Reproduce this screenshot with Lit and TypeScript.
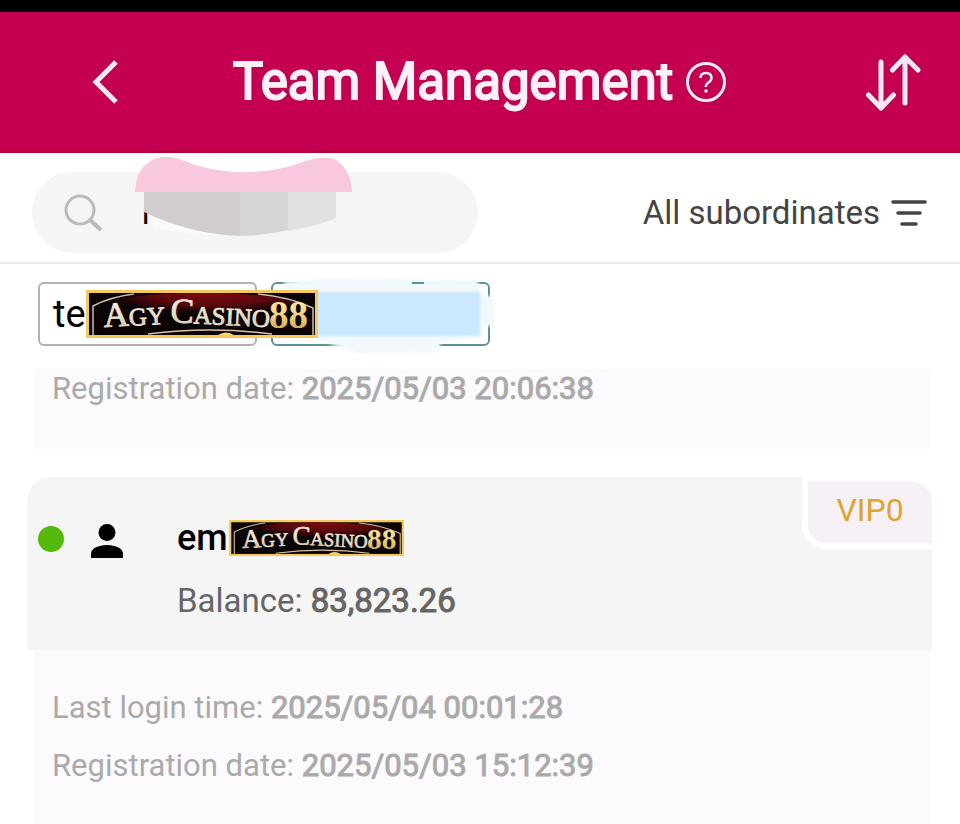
import { LitElement, html, css } from "lit";
import { customElement, property } from "lit/decorators.js";

@customElement("casino-logo")
class CasinoLogo extends LitElement {
  static styles = css`
    :host { display: block; }
    .plate { display: block; width: 100%; height: auto; }
    .word { font-family: "Liberation Serif", "Times New Roman", serif; fill: url(#silver); stroke: #f0e6d4; stroke-width: 0.8; }
    .gold { font-family: "Liberation Serif", "Times New Roman", serif; font-weight: 700; fill: url(#gold); }
    .big { font-size: 35px; }
    .small { font-size: 25px; }
    .digits { font-size: 39px; }
  `;

  render() {
    return html`<svg class="plate" viewBox="0 0 232 48" role="img" aria-label="Agy Casino88">
      <defs>
        <linearGradient id="silver" x1="0" y1="0" x2="0" y2="1">
          <stop offset="0" stop-color="#fffdf4" /><stop offset="0.6" stop-color="#e6dac4" /><stop offset="1" stop-color="#b39a78" />
        </linearGradient>
        <linearGradient id="gold" x1="0" y1="0" x2="0" y2="1">
          <stop offset="0" stop-color="#fff3b4" /><stop offset="0.5" stop-color="#f3d584" /><stop offset="1" stop-color="#c39550" />
        </linearGradient>
        <radialGradient id="glow" cx="0.55" cy="0" r="0.5">
          <stop offset="0" stop-color="#7d0c10" /><stop offset="0.6" stop-color="#5a080b" /><stop offset="1" stop-color="#0b0405" />
        </radialGradient>
      </defs>
      <rect width="232" height="48" fill="#f5c95a" />
      <rect x="3" y="3" width="226" height="42" fill="#0b0405" />
      <path d="M7 16Q40 3 116 3T227 16L225 36Q116 44 60 43L7 38Z" fill="url(#glow)" />
      <path d="M7 45V16Q24 7 48 4M172 4Q204 7 227 18V45" fill="none" stroke="#cdbfae" stroke-width="1.5" />
      <path d="M62 44Q124 36 186 44" fill="none" stroke="#d8c5a0" stroke-width="1.5" />
      <path d="M132 45Q140 40 148 45Z" fill="#ffd869" />
      <text class="word" transform="rotate(-3 18 37)"><tspan class="big" x="18" y="37">A</tspan><tspan class="small">GY</tspan></text>
      <text class="word" transform="rotate(3 84 32)"><tspan class="big" x="84" y="32">C</tspan><tspan class="small">ASINO</tspan></text>
      <text class="gold digits" x="183" y="38">88</text>
    </svg>`;
  }
}

interface Fact { label: string; value: string; }

@customElement("fact-line")
class FactLine extends LitElement {
  @property() label = "";
  @property() value = "";
  static styles = css`
    :host { display: block; white-space: nowrap; }
    .value { -webkit-text-stroke: 1px currentColor; }
  `;
  render() {
    return html`<span>${this.label}:</span> <span class="value">${this.value}</span>`;
  }
}

@customElement("app-root")
class AppRoot extends LitElement {
  static styles = css`
    :host {
      display: flex; flex-direction: column; min-height: 100vh;
      background: #fff; color: #000;
      font-family: Roboto, "Liberation Sans", sans-serif; font-size: 32px; line-height: 40px;
    }
    * { box-sizing: border-box; }
    button { border: 0; padding: 0; background: none; font: inherit; color: inherit; cursor: pointer; }
    svg { display: block; }
    .status { height: 12px; background: #000; }
    .header {
      display: grid; grid-template-columns: 1fr auto 1fr; align-items: center;
      height: 141px; padding: 0 38px; background: #c60051; color: #ffe6f4;
      border-bottom: 2px solid #a8003f;
    }
    .heading { display: flex; align-items: center; gap: 12px; }
    .title {
      margin: 0; font-size: 51px; line-height: 64px; font-weight: 400; white-space: nowrap; color: #fff0f8;
      -webkit-text-stroke: 2px currentColor; text-shadow: 0 0 3px #6d1040;
    }
    .header svg { filter: drop-shadow(0 0 1px #7d1648); }
    .sort { justify-self: end; }
    .back { justify-self: start; margin-left: 52px; }
    .toolbar {
      display: flex; align-items: center; justify-content: space-between;
      padding: 19px 32px 9px; border-bottom: 2px solid #ede6eb;
    }
    .search {
      position: relative; display: flex; align-items: center; gap: 40px; flex: 0 1 446px; min-width: 0;
      height: 81px; padding: 0 32px; border-radius: 41px; background: #f5f5f5;
    }
    .search-icon { flex: none; }
    .query { flex: 1; width: 0; min-width: 0; border: 0; padding: 0; background: none; font: inherit; outline: none; color: #000; }
    .scribble { position: absolute; left: 102px; top: -16px; }
    .filter { display: flex; align-items: center; gap: 10px; color: #444; white-space: nowrap; font-size: 33px; }
    .tabs { position: relative; display: flex; gap: 14px; padding: 18px 38px 23px; }
    .tab {
      width: 219px; height: 64px; padding: 0 13px; text-align: left; font-size: 38px;
      border: 2px solid #b2b0b2; border-radius: 6px;
    }
    .tab.active { border-color: #5c9298; }
    .smear { position: absolute; left: 262px; top: 4px; }
    .tab-logo { position: absolute; left: 86px; top: 26px; width: 232px; }
    .facts { display: flex; flex-direction: column; gap: 18px; margin: 0 30px 0 34px; padding: 0 18px; background: #fcfafd; color: #aaa; font-size: 31px; }
    .previous { height: 80px; }
    .card { display: flex; flex-direction: column; flex: 1; margin-top: 28px; }
    .summary {
      position: relative; display: grid; grid-template-columns: 26px 34px auto; column-gap: 26px;
      height: 173px; margin: 0 28px 0 27px; padding: 40px 11px 0; border-radius: 24px 24px 0 0; background: #f5f5f5;
    }
    .online { width: 26px; height: 26px; margin-top: 9px; border-radius: 50%; background: #55b90c; }
    .person { margin-top: 6px; }
    .account { display: flex; flex-direction: column; gap: 22px; padding-left: 27px; color: #666; }
    .name { display: flex; align-items: center; gap: 1px; margin: 0; height: 42px; color: #000; font-size: 36px; font-weight: 500; }
    .name-logo { width: 175px; }
    .money { font-size: 33px; }
    .vip {
      position: absolute; right: 0; top: 0; width: 130px; height: 72px;
      border: solid #fff; border-width: 4px 0 6px 6px; border-radius: 0 24px 0 24px;
      background: #f6f1f6; color: #dfa32f; text-align: center; line-height: 58px; font-size: 32px;
    }
    .details { flex: 1; padding-top: 38px; padding-bottom: 36px; }
  `;

  private previous: Fact[] = [{ label: "Registration date", value: "2025/05/03 20:06:38" }];
  private details: Fact[] = [
    { label: "Last login time", value: "2025/05/04 00:01:28" },
    { label: "Registration date", value: "2025/05/03 15:12:39" },
  ];

  private facts(list: Fact[]) {
    return list.map((f) => html`<fact-line .label=${f.label} .value=${f.value}></fact-line>`);
  }

  render() {
    return html`
      <div class="status"></div>
      <header class="header">
        <button class="back" aria-label="Back">
          <svg width="30" height="46" viewBox="0 0 30 46" fill="none" stroke="currentColor" stroke-width="5"><path d="M26 3L6 23L26 43" /></svg>
        </button>
        <div class="heading">
          <h1 class="title">Team Management</h1>
          <button aria-label="Help">
            <svg width="42" height="42" viewBox="0 0 42 42" fill="none" stroke="currentColor" stroke-width="3">
              <circle cx="21" cy="21" r="18.5" />
              <path d="M15.5 17Q15.5 12 21 12T26.5 17Q26.5 19.5 23.5 21.5T21 26" stroke-width="2.6" />
              <circle cx="21" cy="30" r="1.8" fill="currentColor" stroke="none" />
            </svg>
          </button>
        </div>
        <button class="sort" aria-label="Sort">
          <svg width="58" height="60" viewBox="0 0 58 60" fill="none" stroke="currentColor" stroke-width="5" stroke-linecap="round" stroke-linejoin="round">
            <path d="M17 10V56M4.5 43L17 56L29.5 43M41 51V5M28.5 18L41 5L54 18" />
          </svg>
        </button>
      </header>
      <div class="toolbar">
        <div class="search">
          <svg class="search-icon" width="38" height="38" viewBox="0 0 38 38" fill="none" stroke="#bbb" stroke-width="3">
            <circle cx="16" cy="16" r="14" /><path d="M26 26L37 36" stroke-width="4" />
          </svg>
          <input class="query" type="text" aria-label="Search members" value="r" />
          <svg class="scribble" width="220" height="84" viewBox="0 0 220 84" aria-hidden="true">
            <path d="M16 60Q70 76 100 79Q60 80 20 72Z" fill="#fafafa" />
            <path d="M10 34H106V80Q56 78 10 56Z" fill="#d0ccd0" />
            <path d="M106 34H154V74Q130 80 106 80Z" fill="#d5d5d5" />
            <path d="M154 34H202V62Q184 70 154 75Z" fill="#e2e1e2" />
            <path d="M1 36Q2 8 24 2Q36 -2 58 8Q108 24 160 9Q190 -3 202 4Q217 14 218 36Z" fill="#f8c8df" />
          </svg>
        </div>
        <button class="filter">
          <span>All subordinates</span>
          <svg width="38" height="30" viewBox="0 0 38 30" fill="none" stroke="currentColor" stroke-width="3.5" stroke-linecap="round"><path d="M3 4H35M8 15H30M12 26H26" /></svg>
        </button>
      </div>
      <nav class="tabs">
        <button class="tab">te</button>
        <button class="tab active" aria-label="Second filter"></button>
        <svg class="smear" width="236" height="86" viewBox="0 0 236 86" aria-hidden="true">
          <defs><filter id="soft"><feGaussianBlur stdDeviation="1.5" /></filter></defs>
          <path d="M22 14L60 10L215 12L221 28H232V58H220V68L178 74V84L100 86L74 78L50 68V24H22Z" fill="#f1f9fd" filter="url(#soft)" />
          <rect x="50" y="24" width="168" height="44" fill="#cbe8fe" filter="url(#soft)" />
          <path d="M150 15H162" stroke="#5c9298" stroke-width="2" />
        </svg>
        <casino-logo class="tab-logo"></casino-logo>
      </nav>
      <section class="facts previous">${this.facts(this.previous)}</section>
      <article class="card">
        <div class="summary">
          <span class="online"></span>
          <svg class="person" width="34" height="36" viewBox="0 0 34 36"><circle cx="17" cy="9.5" r="8.5" /><path d="M1 35V31Q1 23 17 22Q33 23 33 31V35Z" /></svg>
          <div class="account">
            <h2 class="name"><span>em</span><casino-logo class="name-logo"></casino-logo></h2>
            <fact-line class="money" label="Balance" value="83,823.26"></fact-line>
          </div>
          <span class="vip">VIP0</span>
        </div>
        <div class="facts details">${this.facts(this.details)}</div>
      </article>
    `;
  }
}
